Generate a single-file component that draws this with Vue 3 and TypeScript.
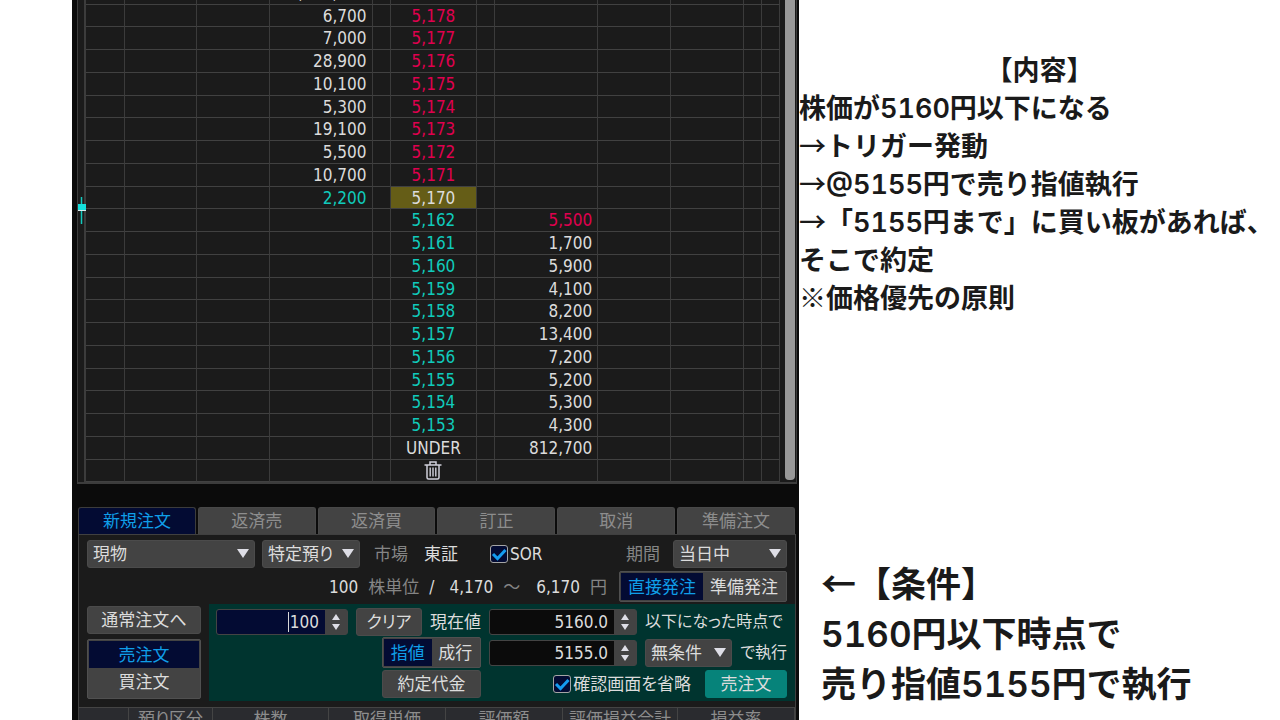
<script setup lang="ts">
import { ref } from 'vue'

interface Row { ask?: string; price: string; bid?: string; kind: string; accent?: string }

const up = (ask: string, price: string): Row => ({ ask, price, kind: 'up' })
const down = (price: string, bid: string, accent = ''): Row => ({ price, bid, kind: 'down', accent })

const rows: Row[] = [
  { ask: '1,091,100', price: 'OVER', kind: 'plain' },
  up('6,700', '5,178'), up('7,000', '5,177'), up('28,900', '5,176'), up('10,100', '5,175'),
  up('5,300', '5,174'), up('19,100', '5,173'), up('5,500', '5,172'), up('10,700', '5,171'),
  { ask: '2,200', price: '5,170', kind: 'current', accent: 'down' },
  down('5,162', '5,500', 'up'), down('5,161', '1,700'), down('5,160', '5,900'), down('5,159', '4,100'),
  down('5,158', '8,200'), down('5,157', '13,400'), down('5,156', '7,200'), down('5,155', '5,200'),
  down('5,154', '5,300'), down('5,153', '4,300'),
  { price: 'UNDER', bid: '812,700', kind: 'plain' },
  { price: '', kind: 'trash' },
]

const tabs = ['新規注文', '返済売', '返済買', '訂正', '取消', '準備注文']
const activeTab = ref(0)
const holdings = ['', '預り区分', '株数', '取得単価', '評価額', '評価損益合計', '損益率']

const quantity = ref('100')
const trigger = ref('5160.0')
const limit = ref('5155.0')
const route = ref('direct')
const side = ref('sell')
const priceType = ref('limit')
const sor = ref(true)
const skipConfirm = ref(true)
</script>

<template>
  <div class="page">
    <main class="app">
      <section class="board">
        <div class="gutter">
          <svg class="candle" width="9" height="27" viewBox="0 0 9 27">
            <path d="M4.500 0V27" stroke="#12c9bd" stroke-width="1.500" />
            <rect y="7" width="9" height="6" fill="#14e0dc" />
            <rect y="13" width="9" height="1" fill="#d8eeee" />
          </svg>
        </div>
        <table class="ladder">
          <colgroup>
            <col class="c39"><col class="c72"><col class="c73"><col class="c103"><col class="c18"><col class="c87">
            <col class="c18"><col class="c103"><col class="c73"><col class="c73"><col class="c18"><col class="c18">
          </colgroup>
          <tbody>
            <tr v-for="(r, i) in rows" :key="i">
              <td /><td /><td />
              <td class="num" :class="r.kind === 'current' ? r.accent : ''">{{ r.ask }}</td>
              <td />
              <td class="price" :class="r.kind">
                <svg v-if="r.kind === 'trash'" width="18" height="19" viewBox="0 0 18 19" fill="none" stroke="#cfcfda" stroke-width="1.500">
                  <path d="M0.500 4H17.500M6 3.500V1H12V3.500M3 4.500V16.500Q3 18 4.500 18H13.500Q15 18 15 16.500V4.500" />
                  <path d="M6.200 6.500V15.500M9 6.500V15.500M11.800 6.500V15.500" stroke-width="1.400" />
                </svg>
                <template v-else>{{ r.price }}</template>
              </td>
              <td />
              <td class="num" :class="r.kind === 'down' ? r.accent : ''">{{ r.bid }}</td>
              <td /><td /><td /><td />
            </tr>
          </tbody>
        </table>
        <div class="scroll"><div class="thumb" /></div>
      </section>

      <nav class="tabs" role="tablist">
        <button v-for="(t, i) in tabs" :key="t" type="button" role="tab" :aria-selected="i === activeTab"
          :class="{ on: i === activeTab }" @click="activeTab = i">{{ t }}</button>
      </nav>

      <form class="order" @submit.prevent>
        <div class="line first">
          <span class="pick account">
            <select aria-label="取引区分"><option>現物</option></select>
            <svg width="12" height="9" viewBox="0 0 12 9"><path d="M0 0H12L6 9Z" /></svg>
          </span>
          <span class="pick deposit">
            <select aria-label="預り区分"><option>特定預り</option></select>
            <svg width="12" height="9" viewBox="0 0 12 9"><path d="M0 0H12L6 9Z" /></svg>
          </span>
          <span class="dim market">市場</span>
          <span class="exchange">東証</span>
          <label class="check"><input v-model="sor" type="checkbox"><svg viewBox="0 0 18 18"><path d="M3 9L7.500 13.500L15.500 5" /></svg>SOR</label>
          <label class="dim term" for="term">期間</label>
          <span class="pick period">
            <select id="term"><option>当日中</option></select>
            <svg width="12" height="9" viewBox="0 0 12 9"><path d="M0 0H12L6 9Z" /></svg>
          </span>
        </div>

        <div class="line second">
          <span>100</span><span class="dim">株単位</span><span>/</span><span class="low">4,170</span>
          <span class="dim">～</span><span class="high">6,170</span><span class="dim yen">円</span>
          <div class="toggle route">
            <label :class="{ on: route === 'direct' }"><input v-model="route" type="radio" name="route" value="direct">直接発注</label>
            <label :class="{ on: route === 'ready' }"><input v-model="route" type="radio" name="route" value="ready">準備発注</label>
          </div>
        </div>

        <div class="entry">
          <div class="side">
            <button type="button" class="btn">通常注文へ</button>
            <div class="toggle stack">
              <label :class="{ on: side === 'sell' }"><input v-model="side" type="radio" name="side" value="sell">売注文</label>
              <label :class="{ on: side === 'buy' }"><input v-model="side" type="radio" name="side" value="buy">買注文</label>
            </div>
          </div>

          <div class="teal">
            <div class="line row">
              <div class="head">
                <span class="spin qty">
                  <input v-model="quantity" type="text" aria-label="株数">
                  <i class="caret" />
                  <span class="steps">
                    <button type="button" aria-label="増やす"><svg viewBox="0 0 8 6"><path d="M0 6L4 0L8 6Z" /></svg></button>
                    <button type="button" aria-label="減らす"><svg viewBox="0 0 8 6"><path d="M0 0L4 6L8 0Z" /></svg></button>
                  </span>
                </span>
                <button type="button" class="btn clear">クリア</button>
                <label for="trigger">現在値</label>
              </div>
              <span class="spin">
                <input id="trigger" v-model="trigger" type="text">
                <span class="steps">
                  <button type="button" aria-label="上げる"><svg viewBox="0 0 8 6"><path d="M0 6L4 0L8 6Z" /></svg></button>
                  <button type="button" aria-label="下げる"><svg viewBox="0 0 8 6"><path d="M0 0L4 6L8 0Z" /></svg></button>
                </span>
              </span>
              <span class="kana">以下になった時点で</span>
            </div>

            <div class="line row">
              <div class="head">
                <div class="toggle kind">
                  <label :class="{ on: priceType === 'limit' }"><input v-model="priceType" type="radio" name="kind" value="limit">指値</label>
                  <label :class="{ on: priceType === 'market' }"><input v-model="priceType" type="radio" name="kind" value="market">成行</label>
                </div>
              </div>
              <span class="spin">
                <input v-model="limit" type="text" aria-label="指値価格">
                <span class="steps">
                  <button type="button" aria-label="上げる"><svg viewBox="0 0 8 6"><path d="M0 6L4 0L8 6Z" /></svg></button>
                  <button type="button" aria-label="下げる"><svg viewBox="0 0 8 6"><path d="M0 0L4 6L8 0Z" /></svg></button>
                </span>
              </span>
              <span class="pick cond">
                <select aria-label="執行条件"><option>無条件</option></select>
                <svg width="12" height="9" viewBox="0 0 12 9"><path d="M0 0H12L6 9Z" /></svg>
              </span>
              <span class="kana exec">で執行</span>
            </div>

            <div class="line row">
              <div class="head"><button type="button" class="btn cost">約定代金</button></div>
              <label class="check skip"><input v-model="skipConfirm" type="checkbox"><svg viewBox="0 0 18 18"><path d="M3 9L7.500 13.500L15.500 5" /></svg>確認画面を省略</label>
              <button type="submit" class="btn submit">売注文</button>
            </div>
          </div>
        </div>

        <table class="holdings">
          <colgroup><col class="h50"><col class="h84"><col class="h116"><col class="h117"><col class="h117"><col class="h115"><col class="h117"></colgroup>
          <thead><tr><th v-for="(h, i) in holdings" :key="i">{{ h }}</th></tr></thead>
        </table>
      </form>
    </main>

    <aside class="notes">
      <section class="content">
        <h2>【内容】</h2>
        <p>株価が5160円以下になる</p>
        <p><span class="sym">→</span>トリガー発動</p>
        <p><span class="sym">→</span>@5155円で売り指値執行</p>
        <p><span class="sym">→</span>「5155円まで」に買い板があれば、</p>
        <p>そこで約定</p>
        <p><span class="mark">※</span>価格優先の原則</p>
      </section>
      <section class="condition">
        <h2><span class="mark">←</span>【条件】</h2>
        <p>5160円以下時点で</p>
        <p>売り指値5155円で執行</p>
      </section>
    </aside>
  </div>
</template>

<style>
body { background: #fff; overflow: hidden; }
</style>

<style scoped>
* { box-sizing: border-box; }
.page {
  display: grid;
  grid-template-columns: 72px 727fr 481fr;
  height: 100vh;
  overflow: hidden;
}
.app {
  grid-column: 2;
  display: flex;
  flex-direction: column;
  min-width: 0;
  overflow: hidden;
  background: #0b0b0b;
  color: #dcdcdc;
  font: 17px/22px "DejaVu Sans Condensed", "Noto Sans", "Noto Sans CJK JP", sans-serif;
  font-feature-settings: "palt";
}
button, input, select { font: inherit; font-feature-settings: inherit; color: inherit; margin: 0; }
button { cursor: pointer; }

.board {
  flex: none;
  display: flex;
  align-items: stretch;
  margin: 0 2px 0 5px;
  background: #1b1b1b;
  border: solid #3c3c3c;
  border-width: 0 1px 2px 1px;
  overflow: hidden;
}
.gutter { position: relative; flex: none; width: 8px; border-right: 2px solid #3c3c3c; }
.candle { position: absolute; left: -1px; top: 197px; }
.ladder {
  flex: 1;
  margin-top: -18px;
  min-width: 0;
  table-layout: fixed;
  border-spacing: 0;
}
.ladder td {
  padding: 0;
  border-right: 1px solid #3b3b3b;
  border-bottom: 1px solid #414141;
  line-height: 20px;
  white-space: nowrap;
}
.ladder tr { height: 23px; }
.ladder tr:nth-child(4n + 2) { height: 22px; }
.c18 { width: 18px; }
.c39 { width: 39px; }
.c72 { width: 72px; }
.c73 { width: 73px; }
.c87 { width: 87px; }
.c103 { width: 103px; }
.ladder .num { text-align: right; padding-right: 5px; }
.ladder .price { text-align: center; }
.ladder .price svg { display: block; margin: 0 auto; }
.up { color: #e0004f; }
.down { color: #10cbbc; }
.ladder .current { background: #655d17; }
.scroll { flex: none; width: 16px; padding: 0 1px 2px 5px; display: flex; }
.thumb { flex: 1; background: #999; border-radius: 0 0 4px 4px; }

.tabs { flex: none; display: flex; gap: 2px; margin: 23px 4px 0 6px; }
.tabs button {
  flex: 1 1 0;
  height: 27px;
  padding: 0;
  color: #8d8d8d;
  background: #434343;
  border: 1px solid #484848;
  border-bottom: 0;
  border-radius: 3px 3px 0 0;
}
.tabs .on { color: #0f9ee8; background: #030b33; border-color: #3c3c3c; }

.order {
  flex: 1;
  display: flex;
  flex-direction: column;
  margin: 0 3px 0 6px;
  background: #1b1b1b;
  border: 1px solid #404040;
  border-bottom: 0;
}
.line { display: flex; align-items: center; white-space: nowrap; }
.dim { color: #858585; }
.first { padding: 5px 8px 0; }
.pick { position: relative; display: inline-flex; flex: none; }
.pick select {
  appearance: none;
  width: 100%;
  height: 28px;
  padding: 0 24px 0 5px;
  background: #434343;
  border: 1px solid #4b4b4b;
  border-radius: 3px;
}
.pick svg { position: absolute; right: 6px; top: 9px; fill: #dedee6; pointer-events: none; }
.account { width: 168px; }
.deposit { width: 98px; margin-left: 7px; }
.market { margin-left: 14px; }
.exchange { margin-left: 16px; }
.check { display: flex; align-items: center; position: relative; margin-left: 32px; }
.check input {
  appearance: none;
  width: 18px;
  height: 18px;
  margin-right: 2px;
  background: #030b33;
  border: 1px solid #a5a5a5;
  border-radius: 3px;
}
.check svg { position: absolute; left: 0; width: 18px; height: 18px; fill: none; stroke: #149cf0; stroke-width: 3; pointer-events: none; visibility: hidden; }
.check input:checked + svg { visibility: visible; }
.term { margin-left: auto; }
.period { width: 114px; margin-left: 13px; }

.second { justify-content: flex-end; gap: 10px; padding: 3px 8px 0; }
.low { margin-left: 5px; }
.high { margin-left: 6px; }
.toggle {
  display: flex;
  padding: 1px;
  background: #434343;
  border: 1px solid #505050;
  border-radius: 2px;
}
.toggle label { flex: 1; display: flex; align-items: center; justify-content: center; cursor: pointer; }
.toggle input { appearance: none; width: 0; height: 0; }
.toggle .on { color: #0f9ee8; background: #030b33; }
.route { width: 168px; height: 31px; margin-left: 2px; }

.entry { display: flex; margin-top: 2px; }
.side { flex: none; width: 130px; padding: 2px 8px 0; }
.btn {
  height: 28px;
  padding: 0;
  background: #434343;
  border: 1px solid #4b4b4b;
  border-radius: 3px;
}
.side .btn { display: block; width: 100%; }
.stack { flex-direction: column; height: 60px; margin-top: 5px; padding-bottom: 3px; }
.teal { flex: 1; display: flex; flex-direction: column; min-width: 0; padding: 2px 8px 2px 7px; background: #00342f; }
.row { height: 31px; gap: 8px; }
.head { flex: none; display: flex; align-items: center; justify-content: flex-end; gap: 8px; width: 265px; }
.spin {
  position: relative;
  flex: none;
  display: flex;
  width: 148px;
  height: 26px;
  background: #434343;
  border: 1px solid #444;
  border-radius: 3px;
  overflow: hidden;
}
.spin input { flex: 1; min-width: 0; padding: 0 6px; text-align: right; background: #0b0b0b; border: 0; }
.qty { width: 132px; }
.qty input { background: #030b33; }
.caret { position: absolute; right: 58px; top: 2px; width: 1px; height: 20px; background: #d8d8d8; }
.steps { flex: none; width: 22px; display: flex; flex-direction: column; justify-content: center; align-items: center; gap: 4px; }
.steps button { display: block; width: 8px; height: 6px; padding: 0; background: none; border: 0; }
.steps svg { display: block; width: 8px; height: 6px; fill: #dedee6; }
.clear { width: 68px; }
.kind { width: 99px; height: 31px; }
.cond { width: 87px; }
.kana { font-size: 16px; }
.exec { margin-left: auto; }
.cost { width: 99px; }
.skip { margin-left: auto; }
.submit { width: 82px; margin-left: 6px; background: #06837a; border-color: #06837a; }

.holdings {
  width: 100%;
  margin-top: 6px;
  table-layout: fixed;
  border-spacing: 0;
  border-top: 1px solid #444;
  background: #2a2b2f;
}
.holdings th { padding: 0; font-weight: 400; color: #8d8d8d; border-right: 1px solid #444; white-space: nowrap; }
.h50 { width: 50px; }
.h84 { width: 84px; }
.h115 { width: 115px; }
.h116 { width: 116px; }
.h117 { width: 117px; }

.notes {
  grid-column: 3;
  display: flex;
  flex-direction: column;
  justify-content: space-between;
  min-width: 0;
  padding: 52px 0 11px;
  color: #1a1a1a;
  font-family: Inter, "Noto Sans CJK JP", sans-serif;
  font-weight: 600;
  font-variant-numeric: tabular-nums;
  white-space: nowrap;
}
.notes h2, .notes p { margin: 0; font-size: inherit; font-weight: inherit; }
.content { font-size: 27px; line-height: 38px; }
.content h2 { text-align: center; }
.condition { padding-left: 22px; font-size: 35px; line-height: 50px; }
.sym, .mark { font-family: "Noto Sans CJK JP", sans-serif; line-height: 1; }
.sym { font-weight: 500; }
</style>
